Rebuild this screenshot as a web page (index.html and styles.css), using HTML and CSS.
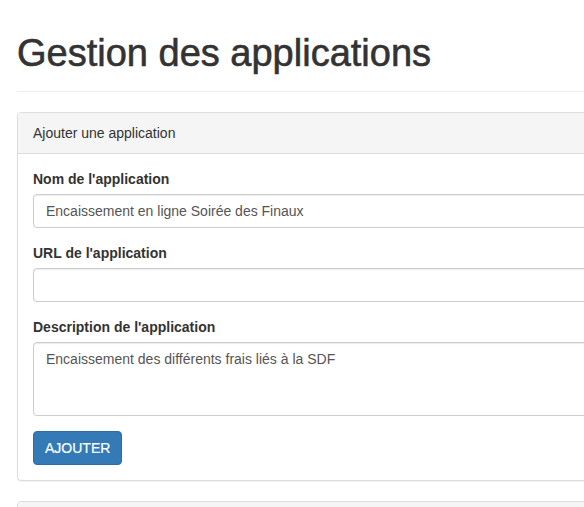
FILE: index.html
```html
<!DOCTYPE html>
<html lang="fr">
<head>
<meta charset="utf-8">
<title>Gestion des applications</title>
<link rel="stylesheet" href="styles.css">
</head>
<body>
<div class="page">
  <div class="container">
    <div class="page-header">
      <h1>Gestion des applications</h1>
    </div>

    <div class="panel">
      <div class="panel-heading">Ajouter une application</div>
      <div class="panel-body">
        <form class="form">
          <div class="form-group">
            <label for="nom">Nom de l'application</label>
            <input id="nom" class="form-control" type="text" value="Encaissement en ligne Soirée des Finaux">
          </div>
          <div class="form-group">
            <label for="url">URL de l'application</label>
            <input id="url" class="form-control" type="text" value="">
          </div>
          <div class="form-group">
            <label for="desc">Description de l'application</label>
            <textarea id="desc" class="form-control" rows="3">Encaissement des différents frais liés à la SDF</textarea>
          </div>
          <button type="button" class="btn btn-primary">AJOUTER</button>
        </form>
      </div>
    </div>

    <div class="panel">
      <div class="panel-heading">&nbsp;</div>
      <div class="panel-body"></div>
    </div>
  </div>
</div>
</body>
</html>
```

FILE: styles.css
```css
* {
  box-sizing: border-box;
}

html, body {
  margin: 0;
  padding: 0;
  overflow: hidden;
  background: #fff;
}

body {
  font-family: "Liberation Sans", Arial, Helvetica, sans-serif;
  font-size: 14px;
  line-height: 20px;
  color: #333;
}

.page {
  width: 100%;
  overflow: hidden;
}

.container {
  width: 760px;
  padding: 0 17px;
}

.page-header {
  padding-bottom: 9px;
  margin: 0 0 20px;
  border-bottom: 1px solid #eee;
}

.page-header h1 {
  margin: 32px 0 8px;
  font-size: 38px;
  font-weight: normal;
  line-height: 42px;
  color: #333;
  -webkit-text-stroke: 0.6px #333;
}

.panel {
  margin-bottom: 20px;
  background: #fff;
  border: 1px solid #ddd;
  border-radius: 4px;
  box-shadow: 0 1px 1px rgba(0, 0, 0, 0.05);
}

.panel-heading {
  padding: 10px 15px;
  background: #f5f5f5;
  border-bottom: 1px solid #ddd;
  border-radius: 3px 3px 0 0;
  color: #333;
}

.panel-body {
  padding: 15px;
}

.form-group {
  margin-bottom: 15px;
}

label {
  display: block;
  margin-bottom: 5px;
  font-weight: bold;
}

.form-control {
  display: block;
  width: 100%;
  height: 34px;
  padding: 6px 12px;
  font-family: inherit;
  font-size: 14px;
  line-height: 20px;
  color: #555;
  background: #fff;
  border: 1px solid #ccc;
  border-radius: 4px;
  box-shadow: inset 0 1px 1px rgba(0, 0, 0, 0.075);
  margin: 0;
}

textarea.form-control {
  height: 74px;
  resize: vertical;
}

.btn {
  display: inline-block;
  padding: 6px 11px;
  margin: 0;
  font-family: inherit;
  font-size: 14px;
  line-height: 20px;
  border: 1px solid transparent;
  border-radius: 4px;
  cursor: pointer;
}

.btn-primary {
  color: #fff;
  background: #337ab7;
  border-color: #2e6da4;
  -webkit-text-stroke: 0.2px #fff;
}
```
